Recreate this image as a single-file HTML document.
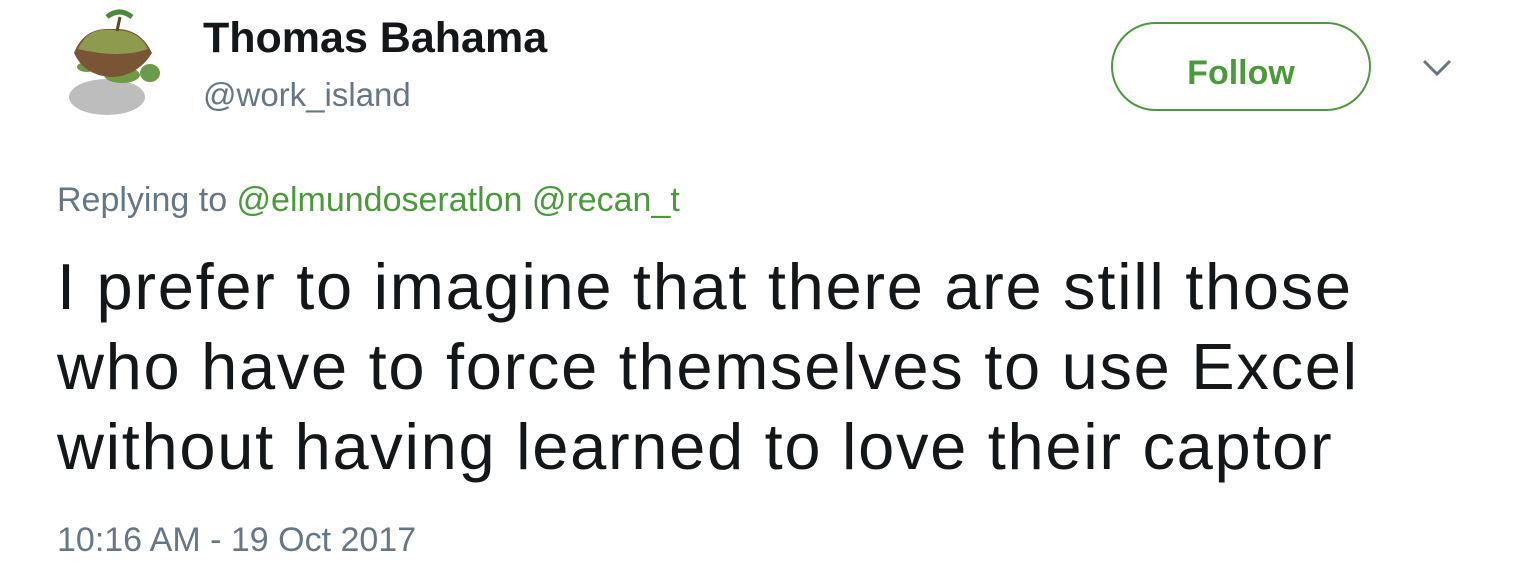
<!DOCTYPE html>
<html><head><style>
body{margin:0;width:1514px;height:577px;background:#fff;font-family:"Liberation Sans",sans-serif;position:relative;overflow:hidden}
.a{position:absolute;white-space:nowrap}
</style></head><body>
<svg class="a" style="left:62px;top:5px" width="110" height="115" viewBox="0 0 110 115">
<ellipse cx="45" cy="92" rx="38" ry="18" fill="#bdbdbd"/>
<ellipse cx="60" cy="70" rx="18" ry="8" fill="#6f9a45"/>
<ellipse cx="25" cy="62" rx="10" ry="5" fill="#6f9a45"/>
<path d="M12 48 Q22 22 50 24 Q78 22 90 48 Q75 72 48 72 Q22 70 12 48Z" fill="#7a5535"/>
<path d="M16 44 Q26 22 50 25 Q76 24 86 44 Q58 54 16 44Z" fill="#8e9a4e"/>
<ellipse cx="88" cy="68" rx="10" ry="9" fill="#6a9a4a"/>
<path d="M55 26 L58 12" stroke="#5a4a2a" stroke-width="3"/>
<path d="M45 12 Q57 2 70 12" stroke="#4a8a3a" stroke-width="5" fill="none"/>
</svg>
<div class="a" style="left:203px;top:14px;font-size:43px;font-weight:bold;color:#14171a">Thomas Bahama</div>
<div class="a" style="left:203px;top:76px;font-size:33px;color:#657786">@work_island</div>
<div class="a" style="left:1111px;top:22px;width:256px;height:85px;border:2px solid #4a9a3a;border-radius:45px;text-align:center;line-height:99px;font-size:34px;font-weight:bold;color:#4a9a3a">Follow</div>
<svg class="a" style="left:1422px;top:58px" width="30" height="20"><path d="M2 3 L15 16 L28 3" stroke="#657786" stroke-width="3" fill="none"/></svg>
<div class="a" style="left:57px;top:181px;font-size:34px;color:#657786">Replying to <span style="color:#4a9a3a">@elmundoseratlon @recan_t</span></div>
<div class="a" style="left:57px;top:247px;font-size:65px;letter-spacing:1.7px;line-height:80px;color:#14171a">I prefer to imagine that there are still those<br>who have to force themselves to use Excel<br>without having learned to love their captor</div>
<div class="a" style="left:57px;top:521px;font-size:34px;color:#657786">10:16 AM - 19 Oct 2017</div>
</body></html>
